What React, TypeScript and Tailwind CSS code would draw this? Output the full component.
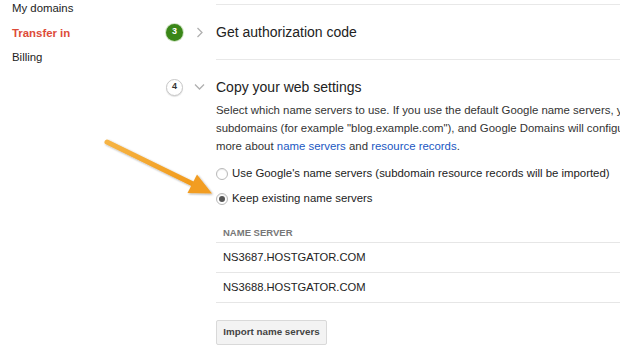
import React from "react";

const font = { fontFamily: '"Liberation Sans", Arial, Helvetica, sans-serif' };

function Arrow() {
  return (
    <svg
      className="absolute left-0 top-0 pointer-events-none"
      width="620"
      height="349"
      viewBox="0 0 620 349"
    >
      <defs>
        <linearGradient id="ag" x1="0" y1="0" x2="1" y2="1">
          <stop offset="0" stopColor="#f6b444" />
          <stop offset="1" stopColor="#f19a1c" />
        </linearGradient>
        <filter id="sh" x="-20%" y="-20%" width="140%" height="140%">
          <feGaussianBlur in="SourceAlpha" stdDeviation="1.2" />
          <feOffset dx="0.5" dy="1" result="b" />
          <feComponentTransfer>
            <feFuncA type="linear" slope="0.35" />
          </feComponentTransfer>
          <feMerge>
            <feMergeNode />
            <feMergeNode in="SourceGraphic" />
          </feMerge>
        </filter>
      </defs>
      <g filter="url(#sh)">
        <line
          x1="107"
          y1="142"
          x2="194"
          y2="184.5"
          stroke="url(#ag)"
          strokeWidth="5"
          strokeLinecap="round"
        />
        <polygon points="212,193.5 187.5,193 197,174.5" fill="#f29d22" />
      </g>
    </svg>
  );
}

function Radio({ checked }: { checked?: boolean }) {
  return (
    <span className="w-[12px] h-[12px] rounded-full border border-[#b9b9b9] bg-white shadow-[inset_0_1px_1px_rgba(0,0,0,0.08)] flex items-center justify-center shrink-0">
      {checked && <span className="w-[6px] h-[6px] rounded-full bg-[#555]" />}
    </span>
  );
}

export default function App() {
  return (
    <div
      className="relative w-[620px] h-[349px] overflow-hidden bg-white flex text-[#222]"
      style={font}
    >
      {/* Sidebar */}
      <div className="w-[166px] shrink-0 pl-[12px] -mt-[4px] text-[11.4px]">
        <div className="h-[24.5px] leading-[24.5px] text-[#222]">My domains</div>
        <div className="h-[24.5px] leading-[24.5px] text-[#dd4b39] font-bold">Transfer in</div>
        <div className="h-[24.5px] leading-[24.5px] text-[#222]">Billing</div>
      </div>

      {/* Main */}
      <div className="flex-1 min-w-0 flex flex-col">
        <div className="h-[4px]" />
        <div className="ml-[50px] border-t border-[#e8e8e8]" />
        {/* Step 3 */}
        <div className="h-[54px] flex items-center">
          <div className="w-[17px] h-[17px] rounded-full bg-[#3a8618] text-white text-[9px] font-bold flex items-center justify-center shadow-[0_0_0_1px_#cfe3c4]">
            3
          </div>
          <div className="w-[33px] flex justify-center">
            <svg width="8" height="11" viewBox="0 0 8 11">
              <path d="M1.5 1 L6 5.5 L1.5 10" fill="none" stroke="#b0b0b0" strokeWidth="1.3" />
            </svg>
          </div>
          <div className="text-[14px] text-[#222] whitespace-nowrap">Get authorization code</div>
        </div>
        <div className="ml-[50px] border-t border-[#e8e8e8]" />
        {/* Step 4 */}
        <div className="mt-[17px] h-[20px] flex items-center">
          <div className="w-[17px] h-[17px] rounded-full bg-white border border-[#c8c8c8] shadow-[0_1px_1px_rgba(0,0,0,0.12)] text-[#333] text-[9px] font-bold flex items-center justify-center">
            4
          </div>
          <div className="w-[33px] flex justify-center">
            <svg width="11" height="8" viewBox="0 0 11 8">
              <path d="M1 1.5 L5.5 6 L10 1.5" fill="none" stroke="#b0b0b0" strokeWidth="1.3" />
            </svg>
          </div>
          <div className="text-[14px] text-[#222] whitespace-nowrap">Copy your web settings</div>
        </div>

        <div className="ml-[50px] mt-[4px] text-[11.4px] leading-[18px] text-[#333] whitespace-nowrap">
          <div>
            Select which name servers to use. If you use the default Google name servers, you can use synthetic records
          </div>
          <div>
            subdomains (for example "blog.example.com"), and Google Domains will configure them for you. Learn
          </div>
          <div>
            more about <span className="text-[#1a57c2]">name servers</span> and{" "}
            <span className="text-[#1a57c2]">resource records</span>.
          </div>
        </div>

        <div className="ml-[50px] mt-[9px] flex flex-col gap-[5px] text-[11.4px] text-[#222]">
          <div className="h-[20px] flex items-center gap-[4px] whitespace-nowrap">
            <Radio />
            <span>Use Google's name servers (subdomain resource records will be imported)</span>
          </div>
          <div className="h-[20px] flex items-center gap-[4px] whitespace-nowrap">
            <Radio checked />
            <span>Keep existing name servers</span>
          </div>
        </div>

        <div className="ml-[50px] mt-[17px]">
          <div className="pl-[7px] pb-[2px] leading-[14px] text-[9.5px] font-bold text-[#777] border-b border-[#e6e6e6]">
            NAME SERVER
          </div>
          <div className="h-[30px] pl-[7px] flex items-center text-[11.2px] text-[#222] border-b border-[#e6e6e6]">
            NS3687.HOSTGATOR.COM
          </div>
          <div className="h-[30px] pl-[7px] flex items-center text-[11.2px] text-[#222] border-b border-[#e6e6e6]">
            NS3688.HOSTGATOR.COM
          </div>
        </div>

        <div className="ml-[50px] mt-[17px]">
          <div className="w-[111px] h-[25px] flex items-center justify-center bg-[#f3f3f3] border border-[#d9d9d9] rounded-[2px] text-[9.8px] font-bold text-[#444]">
            Import name servers
          </div>
        </div>
      </div>

      <Arrow />
    </div>
  );
}
